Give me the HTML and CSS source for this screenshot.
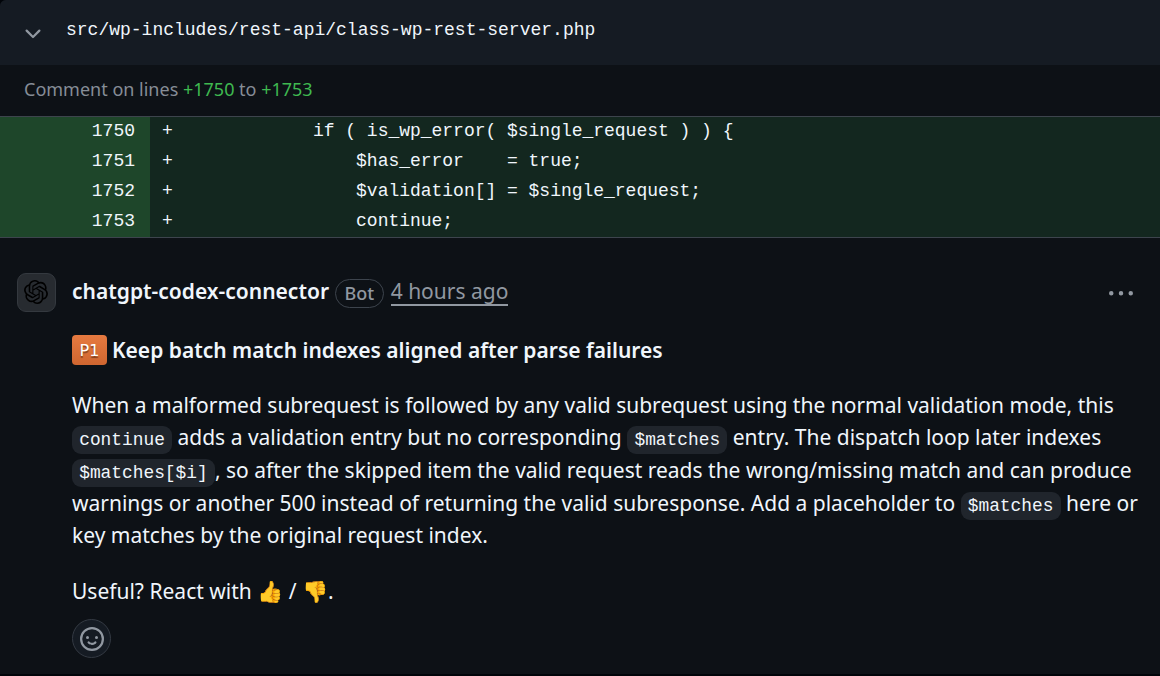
FILE: index.html
```
<!DOCTYPE html>
<html lang="en">
<head>
    <meta charset="UTF-8">
    <meta name="viewport" content="width=device-width, initial-scale=1.0">
    <title>class-wp-rest-server.php review</title>
    <link rel="stylesheet" href="styles.css">
</head>
<body>
<div class="thread">
    <div class="file-header">
        <svg class="chevron" width="24" height="24" viewBox="0 0 16 16"><path d="M12.78 5.22a.749.749 0 0 1 0 1.06l-4.25 4.25a.749.749 0 0 1-1.06 0L3.22 6.28a.749.749 0 1 1 1.06-1.06L8 8.939l3.72-3.719a.749.749 0 0 1 1.06 0Z"/></svg>
        <a class="file-name">src/wp-includes/rest-api/class-wp-rest-server.php</a>
    </div>
    <div class="line-range">Comment on lines <span class="added">+1750</span> to <span class="added">+1753</span></div>

    <div class="diff">
        <div class="row"><span class="num">1750</span><pre class="code">+             if ( is_wp_error( $single_request ) ) {</pre></div>
        <div class="row"><span class="num">1751</span><pre class="code">+                 $has_error    = true;</pre></div>
        <div class="row"><span class="num">1752</span><pre class="code">+                 $validation[] = $single_request;</pre></div>
        <div class="row"><span class="num">1753</span><pre class="code">+                 continue;</pre></div>
    </div>

    <div class="comment">
        <div class="avatar">
            <svg width="24" height="24" viewBox="0 0 24 24"><path d="M22.2819 9.8211a5.9847 5.9847 0 0 0-.5157-4.9108 6.0462 6.0462 0 0 0-6.5098-2.9A6.0651 6.0651 0 0 0 4.9807 4.1818a5.9847 5.9847 0 0 0-3.9977 2.9 6.0462 6.0462 0 0 0 .7427 7.0966 5.98 5.98 0 0 0 .511 4.9107 6.051 6.051 0 0 0 6.5146 2.9001A5.9847 5.9847 0 0 0 13.2599 24a6.0557 6.0557 0 0 0 5.7718-4.2058 5.9894 5.9894 0 0 0 3.9977-2.9001 6.0557 6.0557 0 0 0-.7475-7.0729zm-9.022 12.6081a4.4755 4.4755 0 0 1-2.8764-1.0408l.1419-.0804 4.7783-2.7582a.7948.7948 0 0 0 .3927-.6813v-6.7369l2.02 1.1686a.071.071 0 0 1 .038.052v5.5826a4.504 4.504 0 0 1-4.4945 4.4944zm-9.6607-4.1254a4.4708 4.4708 0 0 1-.5346-3.0137l.142.0852 4.783 2.7582a.7712.7712 0 0 0 .7806 0l5.8428-3.3685v2.3324a.0804.0804 0 0 1-.0332.0615L9.74 19.9502a4.4992 4.4992 0 0 1-6.1408-1.6464zM2.3408 7.8956a4.485 4.485 0 0 1 2.3655-1.9728V11.6a.7664.7664 0 0 0 .3879.6765l5.8144 3.3543-2.0201 1.1685a.0757.0757 0 0 1-.071 0l-4.8303-2.7865A4.504 4.504 0 0 1 2.3408 7.872zm16.5963 3.8558L13.1038 8.364 15.1192 7.2a.0757.0757 0 0 1 .071 0l4.8303 2.7913a4.4944 4.4944 0 0 1-.6765 8.1042v-5.6772a.79.79 0 0 0-.407-.667zm2.0107-3.0231l-.142-.0852-4.7735-2.7818a.7759.7759 0 0 0-.7854 0L9.409 9.2297V6.8974a.0662.0662 0 0 1 .0284-.0615l4.8303-2.7866a4.4992 4.4992 0 0 1 6.6802 4.66zM8.3065 12.863l-2.02-1.1638a.0804.0804 0 0 1-.038-.0567V6.0742a4.4992 4.4992 0 0 1 7.3757-3.4537l-.142.0805L8.704 5.459a.7948.7948 0 0 0-.3927.6813zm1.0976-2.3654l2.602-1.4998 2.6069 1.4998v2.9994l-2.5974 1.4997-2.6067-1.4997Z"/></svg>
        </div>
        <div class="main">
            <div class="meta">
                <span class="author">chatgpt-codex-connector</span>
                <span class="label">Bot</span>
                <a class="time">4 hours ago</a>
                <svg class="kebab" width="24" height="24" viewBox="0 0 16 16"><path d="M8 9a1.5 1.5 0 1 0 0-3 1.5 1.5 0 0 0 0 3ZM1.5 9a1.5 1.5 0 1 0 0-3 1.5 1.5 0 0 0 0 3Zm13 0a1.5 1.5 0 1 0 0-3 1.5 1.5 0 0 0 0 3Z"/></svg>
            </div>
            <div class="title"><span class="badge">P1</span>Keep batch match indexes aligned after parse failures</div>
            <p class="text">When a malformed subrequest is followed by any valid subrequest using the normal validation mode, this <code>continue</code> adds a validation entry but no corresponding <code>$matches</code> entry. The dispatch loop later indexes <code>$matches[$i]</code>, so after the skipped item the valid request reads the wrong/missing match and can produce warnings or another 500 instead of returning the valid subresponse. Add a placeholder to <code>$matches</code> here or key matches by the original request index.</p>
            <p class="text react">Useful? React with 👍 / 👎.</p>
            <button class="smiley">
                <svg width="24" height="24" viewBox="0 0 16 16"><path d="M8 0a8 8 0 1 1 0 16A8 8 0 0 1 8 0ZM1.5 8a6.5 6.5 0 1 0 13 0 6.5 6.5 0 0 0-13 0Zm3.82 1.636a.75.75 0 0 1 1.038.175l.007.009c.103.118.22.222.35.31.264.178.683.37 1.285.37.602 0 1.02-.192 1.285-.371.13-.088.247-.192.35-.31l.007-.008a.75.75 0 0 1 1.222.87c-.06.085-.13.165-.205.241-.16.166-.338.316-.53.445-.63.418-1.37.638-2.127.629-.946 0-1.652-.308-2.126-.63a3.331 3.331 0 0 1-.715-.657a.75.75 0 0 1 .163-1.073ZM12 7a1 1 0 1 1-2 0 1 1 0 0 1 2 0ZM5 8a1 1 0 1 1 0-2 1 1 0 0 1 0 2Z"/></svg>
            </button>
        </div>
    </div>
</div>
</body>
</html>
```
FILE: styles.css
```
* {
    box-sizing: border-box;
}

body {
    margin: 0;
    background: #010409;
    color: #f0f6fc;
    font-family: "Noto Sans", sans-serif;
    font-size: 21px;
}

.thread {
    height: 674px;
    background: #0d1116;
    border-top-left-radius: 6px;
    overflow: hidden;
}

.file-header {
    display: flex;
    height: 65px;
    padding: 18px 21px;
    background: #151b23;
}

.chevron {
    margin-top: 4px;
    fill: #9198a1;
}

.file-name {
    margin-left: 21px;
    font: 18px/24px "Liberation Mono", monospace;
}

.line-range {
    height: 51px;
    padding-left: 24px;
    line-height: 49px;
    font-size: 18px;
    color: #868d96;
}

.added {
    color: #3fb950;
}

/* diff lines */
.diff {
    height: 122px;
    border-top: 1px solid #3d444d;
    border-bottom: 1px solid #3d444d;
    font: 18px/30px "Liberation Mono", monospace;
    background: #13271f;
}

.row {
    display: flex;
    height: 30px;
    line-height: 28px;
}

.num {
    width: 150px;
    padding-right: 15px;
    text-align: right;
    background: #1e462a;
}

.code {
    margin: 0;
    padding-left: 12px;
    font: inherit;
    letter-spacing: -.02px;
}

/* comment */
.comment {
    display: flex;
    padding: 34px 20px 0 16px;
}

.avatar {
    display: flex;
    align-items: center;
    justify-content: center;
    width: 39px;
    height: 39px;
    margin: .5px 0 0 .5px;
    border: 1px solid #34393f;
    border-radius: 9px;
    background: #272b30;
}

.main {
    flex: 1;
    margin-left: 16.5px;
}

.meta {
    display: flex;
    align-items: center;
    height: 40px;
}

.author {
    font-weight: 600;
    line-height: 36px;
    margin-bottom: 2px;
}

.label {
    height: 29px;
    margin: 2px 7px 0 6px;
    padding: 0 8.5px;
    border: 1px solid #3d444d;
    border-radius: 15px;
    font-size: 18px;
    font-weight: 500;
    line-height: 26px;
    color: #9198a1;
}

.time {
    height: 28px;
    border-bottom: 2px solid #9198a1;
    line-height: 27px;
    color: #9198a1;
}

.kebab {
    margin: 4px 7.5px 0 auto;
    fill: #9198a1;
}

.title {
    display: flex;
    align-items: center;
    margin-top: 22px;
    height: 31px;
    font-weight: 600;
}

.badge {
    width: 35px;
    height: 30px;
    margin-right: 5px;
    border-radius: 4px;
    background: linear-gradient(#e67a40, #cf6630);
    font: 16px/31px "DejaVu Sans", sans-serif;
    text-align: center;
    color: #fff;
    text-shadow: 0 2px 1px rgba(0, 0, 0, .4);
}

.text {
    margin: 23.8px 0 0;
    line-height: 32.6px;
}

.react {
    margin-top: 23px;
}

code {
    padding: 4px 7.2px;
    border-radius: 9px;
    background: #20252c;
    font: 17.85px/20px "Liberation Mono", monospace;
}

.smiley {
    display: flex;
    align-items: center;
    justify-content: center;
    width: 39px;
    height: 39px;
    margin-top: 12px;
    padding: 0;
    border: 1px solid #343a43;
    border-radius: 50%;
    background: #151b23;
}

.smiley svg {
    fill: #9198a1;
}
```
